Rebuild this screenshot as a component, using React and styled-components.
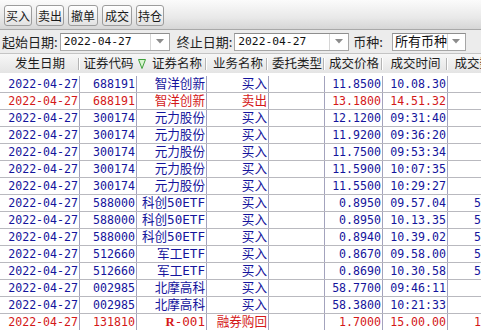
import React from "react";
import styled, { createGlobalStyle } from "styled-components";

const GlobalStyle = createGlobalStyle`
  html, body {
    margin: 0;
    padding: 0;
    background: #fff;
    overflow: hidden;
  }
  body {
    font-family: "Noto Sans CJK SC", "Liberation Sans", sans-serif;
  }
`;

const Page = styled.div`
  width: 481px;
  height: 330px;
  overflow: hidden;
  display: flex;
  flex-direction: column;
`;

const Toolbar = styled.div`
  height: 29px;
  display: flex;
  align-items: center;
  gap: 4px;
  padding-left: 4px;
  background: linear-gradient(#fbfbfb, #e9e9e9 60%, #d6d6d6);
  border-bottom: 1px solid #a9a9a9;
  flex-shrink: 0;
`;

const ToolButton = styled.button`
  height: 21px;
  width: ${p => p.$w || 28}px;
  padding: 0;
  margin-top: 2px;
  border: 1px solid #9c9c9c;
  border-radius: 3px;
  background: linear-gradient(#ffffff, #f1f1f1 50%, #e2e2e2);
  font-family: "Noto Sans CJK SC", sans-serif;
  font-size: 12px;
  line-height: 19px;
  color: #1a1a1a;
`;

const FilterBar = styled.div`
  height: 23px;
  display: flex;
  align-items: center;
  padding-left: 2px;
  background: #ececec;
  border-bottom: 1px solid #c4c4c4;
  flex-shrink: 0;
`;

const Label = styled.span`
  font-size: 13px;
  line-height: 18px;
  color: #222;
  margin-left: ${p => p.$ml || 0}px;
  margin-right: ${p => p.$mr || 2}px;
  white-space: nowrap;
`;

const Combo = styled.div`
  width: ${p => p.$w}px;
  height: 18px;
  box-sizing: border-box;
  display: flex;
  background: #fff;
  border: 1px solid #a6a6a6;
  border-top-color: #8e8e8e;
`;

const ComboText = styled.span`
  flex: 1;
  padding-left: ${p => p.$pl || 3}px;
  font-family: "DejaVu Sans Mono", "Noto Sans CJK SC", monospace;
  font-size: ${p => (p.$cjk ? 13 : 11.3)}px;
  line-height: 16px;
  color: #111;
  white-space: nowrap;
`;

const ComboArrow = styled.span`
  width: 18px;
  display: flex;
  align-items: center;
  justify-content: center;
  border-left: 1px solid #d6d6d6;
`;

const Table = styled.div`
  flex: 1;
  display: flex;
  flex-direction: column;
  min-width: 0;
`;

const HeaderRow = styled.div`
  height: 19px;
  display: flex;
  background: linear-gradient(#f7f7f7, #e4e4e4);
  flex-shrink: 0;
`;

const HeadCell = styled.div`
  position: relative;
  width: ${p => p.$w}px;
  flex-shrink: 0;
  box-sizing: border-box;
  display: flex;
  align-items: center;
  justify-content: ${p => (p.$icon ? "flex-start" : "center")};
  padding-left: ${p => (p.$icon ? 1 : 0)}px;
  font-size: 12.5px;
  line-height: 1;
  color: #1e1e1e;
  white-space: nowrap;

  &::after {
    content: "";
    display: ${p => (p.$noSep ? "none" : "block")};
    position: absolute;
    right: ${p => p.$sepRight ?? 0}px;
    top: 4px;
    bottom: 3px;
    width: 0;
    border-left: 1px solid #b4b4b4;
    border-right: 1px solid #ffffff;
  }
`;

const HeadText = styled.span`
  margin-left: ${p => p.$ml || 0}px;
`;

const Body = styled.div`
  padding-top: 3px;
`;

const Row = styled.div`
  height: 17px;
  display: flex;
  box-sizing: border-box;
  border-bottom: 1px solid #b9b9bf;
  color: ${p => (p.$red ? "#d41818" : "#14149c")};
`;

const Cell = styled.div`
  width: ${p => p.$w}px;
  height: 16px;
  flex-shrink: 0;
  box-sizing: border-box;
  border-right: 1px solid #a3a3bd;
  padding-right: 1px;
  text-align: right;
  overflow: hidden;
  white-space: nowrap;
  font-family: "DejaVu Sans Mono", "Noto Sans CJK SC", monospace;
  font-size: ${p => (p.$cjk ? 12.6 : 11.6)}px;
  line-height: 16px;
`;

const Bold = styled.b`
  font-family: "Liberation Serif", serif;
  font-weight: bold;
`;

const cols = [80, 57, 70, 62, 56, 58, 65, 63];

const rows = [
  { code: "688191", name: "智洋创新", biz: "买入", price: "11.8500", time: "10.08.30", qty: "400" },
  { code: "688191", name: "智洋创新", biz: "卖出", price: "13.1800", time: "14.51.32", qty: "400", red: true },
  { code: "300174", name: "元力股份", biz: "买入", price: "12.1200", time: "09:31:40", qty: "400" },
  { code: "300174", name: "元力股份", biz: "买入", price: "11.9200", time: "09:36:20", qty: "400" },
  { code: "300174", name: "元力股份", biz: "买入", price: "11.7500", time: "09:53:34", qty: "400" },
  { code: "300174", name: "元力股份", biz: "买入", price: "11.5900", time: "10:07:35", qty: "400" },
  { code: "300174", name: "元力股份", biz: "买入", price: "11.5500", time: "10:29:27", qty: "400" },
  { code: "588000", name: "科创50ETF", biz: "买入", price: "0.8950", time: "09.57.04", qty: "50000" },
  { code: "588000", name: "科创50ETF", biz: "买入", price: "0.8950", time: "10.13.35", qty: "50000" },
  { code: "588000", name: "科创50ETF", biz: "买入", price: "0.8940", time: "10.39.02", qty: "50000" },
  { code: "512660", name: "军工ETF", biz: "买入", price: "0.8670", time: "09.58.00", qty: "50000" },
  { code: "512660", name: "军工ETF", biz: "买入", price: "0.8690", time: "10.30.58", qty: "50000" },
  { code: "002985", name: "北摩高科", biz: "买入", price: "58.7700", time: "09:46:11", qty: "400" },
  { code: "002985", name: "北摩高科", biz: "买入", price: "58.3800", time: "10:21:33", qty: "400" },
  { code: "131810", name: "R-001", biz: "融券购回", price: "1.7000", time: "15.00.00", qty: "10000", red: true },
];

const DownArrow = () => (
  <svg width="8" height="5" viewBox="0 0 8 5">
    <polygon points="0,0 8,0 4,4.5" fill="#8c8c8c" />
  </svg>
);

const SortIcon = () => (
  <svg width="8" height="10" viewBox="0 0 8 10">
    <polygon points="0.5,0.5 7.5,0.5 4,9.5" fill="#d8f4d0" stroke="#3f9f3a" strokeWidth="1" />
  </svg>
);

const DateBox = ({ w, value }) => (
  <Combo $w={w}>
    <ComboText>{value}</ComboText>
    <ComboArrow>
      <DownArrow />
    </ComboArrow>
  </Combo>
);

const renderName = name =>
  name === "R-001" ? (
    <>
      <Bold>R</Bold>-001
    </>
  ) : (
    name
  );

export default function App() {
  return (
    <Page>
      <GlobalStyle />
      <Toolbar>
        <ToolButton>买入</ToolButton>
        <ToolButton>卖出</ToolButton>
        <ToolButton $w={30}>撤单</ToolButton>
        <ToolButton $w={30}>成交</ToolButton>
        <ToolButton>持仓</ToolButton>
      </Toolbar>

      <FilterBar>
        <Label>起始日期:</Label>
        <DateBox w={110} value="2022-04-27" />
        <Label $ml={7}>终止日期:</Label>
        <DateBox w={115} value="2022-04-27" />
        <Label $ml={4} $mr={9}>币种:</Label>
        <Combo $w={74}>
          <ComboText $cjk $pl={2}>所有币种</ComboText>
          <ComboArrow>
            <DownArrow />
          </ComboArrow>
        </Combo>
      </FilterBar>

      <Table>
        <HeaderRow>
          <HeadCell $w={cols[0]}>发生日期</HeadCell>
          <HeadCell $w={cols[1]} $noSep>证券代码</HeadCell>
          <HeadCell $w={cols[2]} $icon>
            <SortIcon />
            <HeadText $ml={6}>证券名称</HeadText>
          </HeadCell>
          <HeadCell $w={cols[3]} $sepRight={1}>业务名称</HeadCell>
          <HeadCell $w={cols[4]}>委托类型</HeadCell>
          <HeadCell $w={cols[5]}>成交价格</HeadCell>
          <HeadCell $w={cols[6]}>成交时间</HeadCell>
          <HeadCell $w={cols[7]} $noSep>成交数量</HeadCell>
        </HeaderRow>
        <Body>
          {rows.map((r, i) => (
            <Row key={i} $red={r.red}>
              <Cell $w={cols[0]}>2022-04-27</Cell>
              <Cell $w={cols[1]}>{r.code}</Cell>
              <Cell $w={cols[2]} $cjk>{renderName(r.name)}</Cell>
              <Cell $w={cols[3]} $cjk>{r.biz}</Cell>
              <Cell $w={cols[4]}></Cell>
              <Cell $w={cols[5]}>{r.price}</Cell>
              <Cell $w={cols[6]}>{r.time}</Cell>
              <Cell $w={cols[7]}>{r.qty}</Cell>
            </Row>
          ))}
        </Body>
      </Table>
    </Page>
  );
}
